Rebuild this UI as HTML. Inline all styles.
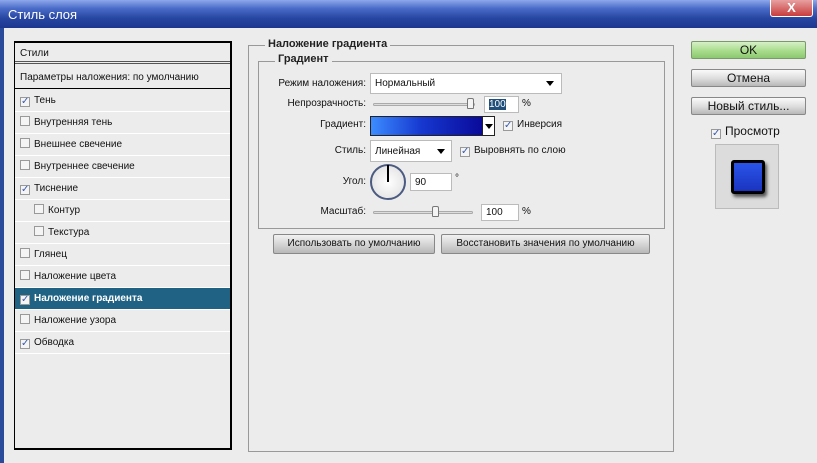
<!DOCTYPE html>
<html><head><meta charset="utf-8"><style>
*{box-sizing:border-box;margin:0;padding:0}
body{width:817px;height:463px;overflow:hidden;background:#ececec;font-family:"Liberation Sans","DejaVu Sans",sans-serif;font-size:11px;color:#111;position:relative}
.a{position:absolute}
.title{left:0;top:0;width:817px;height:28px;background:linear-gradient(#8ea8ec 0%,#4a6cc8 30%,#2646a2 65%,#1c3690 100%)}
.title span{position:absolute;left:8px;top:7px;color:#fff;font-size:13px;font-family:"Liberation Sans Narrow","Liberation Sans",sans-serif}
.close{left:770px;top:0;width:43px;height:17px;background:linear-gradient(#e8a0a0,#c83c3c);border:1px solid #fff;border-top:none;border-radius:0 0 3px 3px;color:#fff;font-weight:bold;text-align:center;font-size:13px;line-height:15px}
.lb{left:0;top:28px;width:4px;height:435px;background:#2a4a9a}
.list{left:14px;top:41px;width:218px;height:409px;border:2px solid #000;border-left-width:1px;background:#ececec}
.row{position:absolute;left:0;width:215px;height:22px;border-bottom:1px solid #fff;line-height:21px;padding-left:5px;font-size:10px}
.cb{display:inline-block;width:10px;height:10px;border:1px solid #999;background:#f4f4f4;vertical-align:-1px;margin-right:4px;position:relative;font-size:10px;line-height:8px;text-align:center;color:#3a5ab0;font-weight:bold}
.sel{background:#1f6284;color:#fff;font-weight:bold}
.panel{left:248px;top:45px;width:426px;height:407px;border:1px solid #999}
.grp{left:258px;top:61px;width:407px;height:168px;border:1px solid #999}
.leg{background:#ececec;padding:0 3px;font-weight:bold;font-size:11px;color:#222}
.lbl{text-align:right;width:120px;font-size:10px}
.inp{background:#fff;border:1px solid #bbb;font-size:10px;padding-left:4px;line-height:15px}
.btn{border:1px solid #888;border-radius:2px;background:linear-gradient(#f2f2f2,#d0d0d0 60%,#b8b8b8);text-align:center;font-size:10px;line-height:17px}
.rbtn{left:691px;width:115px;height:18px;border:1px solid #888;border-radius:2px;background:linear-gradient(#fafafa,#dcdcdc 55%,#b8b8b8);text-align:center;font-size:12px;line-height:17px}
.slider{height:3px;border:1px solid #aaa;background:#ddd;border-radius:2px}
.thumb{width:7px;height:11px;border:1px solid #777;background:#f4f4f4;border-radius:2px 2px 1px 1px}
.arrow{width:0;height:0;border-left:4px solid transparent;border-right:4px solid transparent;border-top:5px solid #000}
</style></head><body>
<div class="a title"><span>Стиль слоя</span></div>
<div class="a close">X</div>
<div class="a lb"></div>

<div class="a list">
<div class="row" style="top:0;height:21px;border-bottom:3px double #555">Стили</div>
<div class="row" style="top:24px;border-bottom:1px solid #000">Параметры наложения: по умолчанию</div>
<div class="row" style="top:47px"><span class="cb">✓</span>Тень</div>
<div class="row" style="top:69px"><span class="cb"></span>Внутренняя тень</div>
<div class="row" style="top:91px"><span class="cb"></span>Внешнее свечение</div>
<div class="row" style="top:113px"><span class="cb"></span>Внутреннее свечение</div>
<div class="row" style="top:135px"><span class="cb">✓</span>Тиснение</div>
<div class="row" style="top:157px;padding-left:19px"><span class="cb"></span>Контур</div>
<div class="row" style="top:179px;padding-left:19px"><span class="cb"></span>Текстура</div>
<div class="row" style="top:201px"><span class="cb"></span>Глянец</div>
<div class="row" style="top:223px"><span class="cb"></span>Наложение цвета</div>
<div class="row sel" style="top:245px"><span class="cb">✓</span>Наложение градиента</div>
<div class="row" style="top:267px"><span class="cb"></span>Наложение узора</div>
<div class="row" style="top:289px"><span class="cb">✓</span>Обводка</div>
</div>

<div class="a panel"></div>
<div class="a leg" style="left:265px;top:38px">Наложение градиента</div>
<div class="a grp"></div>
<div class="a leg" style="left:275px;top:53px">Градиент</div>

<div class="a lbl" style="left:246px;top:78px">Режим наложения:</div>
<div class="a inp" style="left:370px;top:73px;width:192px;height:21px;line-height:19px">Нормальный</div>
<div class="a arrow" style="left:546px;top:81px"></div>

<div class="a lbl" style="left:246px;top:98px">Непрозрачность:</div>
<div class="a slider" style="left:373px;top:103px;width:102px"></div>
<div class="a thumb" style="left:467px;top:98px"></div>
<div class="a inp" style="left:484px;top:96px;width:35px;height:17px"><span style="background:#1f4f7a;color:#fff">100</span></div>
<div class="a" style="left:522px;top:98px;font-size:10px">%</div>

<div class="a lbl" style="left:246px;top:119px">Градиент:</div>
<div class="a" style="left:370px;top:116px;width:113px;height:20px;border:1px solid #222;background:linear-gradient(90deg,#3c8cff,#1638d0 45%,#0a0a9a)"></div>
<div class="a" style="left:482px;top:116px;width:13px;height:20px;border:1px solid #222;background:#fff"></div>
<div class="a arrow" style="left:485px;top:124px"></div>
<div class="a" style="left:503px;top:119px;font-size:10px"><span class="cb">✓</span>Инверсия</div>

<div class="a lbl" style="left:246px;top:145px">Стиль:</div>
<div class="a inp" style="left:370px;top:140px;width:82px;height:22px;line-height:21px">Линейная</div>
<div class="a arrow" style="left:437px;top:149px"></div>
<div class="a" style="left:460px;top:145px;font-size:10px"><span class="cb">✓</span>Выровнять по слою</div>

<div class="a lbl" style="left:246px;top:176px">Угол:</div>
<div class="a" style="left:370px;top:164px;width:36px;height:36px;border:2px solid #4a5a80;border-radius:50%;background:radial-gradient(#fff,#ddd)"></div>
<div class="a" style="left:387px;top:165px;width:2px;height:17px;background:#000"></div>
<div class="a inp" style="left:410px;top:173px;width:42px;height:18px;line-height:17px">90</div>
<div class="a" style="left:455px;top:173px;font-size:10px">°</div>

<div class="a lbl" style="left:246px;top:206px">Масштаб:</div>
<div class="a slider" style="left:373px;top:211px;width:100px"></div>
<div class="a thumb" style="left:432px;top:206px"></div>
<div class="a inp" style="left:481px;top:204px;width:38px;height:17px">100</div>
<div class="a" style="left:522px;top:206px;font-size:10px">%</div>

<div class="a btn" style="left:273px;top:234px;width:162px;height:20px">Использовать по умолчанию</div>
<div class="a btn" style="left:441px;top:234px;width:209px;height:20px">Восстановить значения по умолчанию</div>

<div class="a rbtn" style="top:41px;background:linear-gradient(#d6f0c6,#a8dc8c 55%,#8cc870);border-color:#7a9a6a">OK</div>
<div class="a rbtn" style="top:69px">Отмена</div>
<div class="a rbtn" style="top:97px">Новый стиль...</div>
<div class="a" style="left:711px;top:124px;font-size:12px"><span class="cb">✓</span>Просмотр</div>
<div class="a" style="left:715px;top:144px;width:64px;height:65px;background:#dcdcdc;border:1px solid #bbb"></div>
<div class="a" style="left:731px;top:160px;width:34px;height:34px;border:3px solid #000;border-radius:3px;background:linear-gradient(#2a54e8,#1a34c0);box-shadow:2px 3px 3px #555"></div>
</body></html>
